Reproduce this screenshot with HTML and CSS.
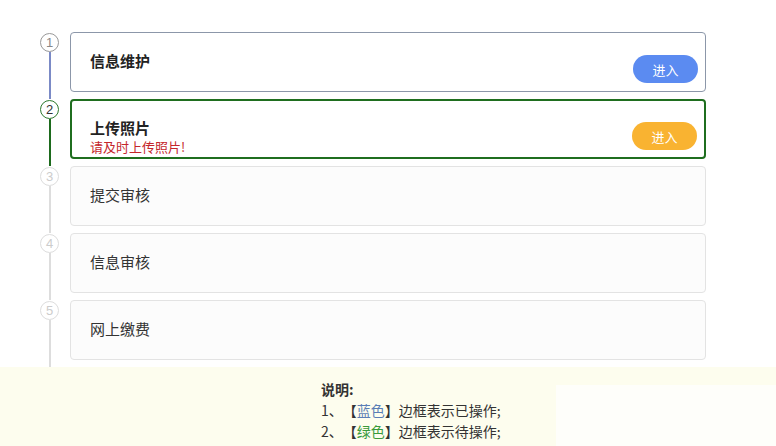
FILE: index.html
```html
<!DOCTYPE html>
<html lang="zh-CN">
<head>
    <meta charset="UTF-8">
    <title>流程</title>
    <link rel="stylesheet" href="styles.css">
</head>
<body>
    <div class="steps">
        <div class="step done">
            <div class="marker"><span class="num">1</span><span class="line"></span></div>
            <div class="card">
                <div class="info"><div class="title">信息维护</div></div>
                <button class="btn blue">进入</button>
            </div>
        </div>
        <div class="step current">
            <div class="marker"><span class="num">2</span><span class="line"></span></div>
            <div class="card">
                <div class="info">
                    <div class="title">上传照片</div>
                    <div class="tip">请及时上传照片!</div>
                </div>
                <button class="btn orange">进入</button>
            </div>
        </div>
        <div class="step">
            <div class="marker"><span class="num">3</span><span class="line"></span></div>
            <div class="card"><div class="info"><div class="title">提交审核</div></div></div>
        </div>
        <div class="step">
            <div class="marker"><span class="num">4</span><span class="line"></span></div>
            <div class="card"><div class="info"><div class="title">信息审核</div></div></div>
        </div>
        <div class="step">
            <div class="marker"><span class="num">5</span><span class="line"></span></div>
            <div class="card"><div class="info"><div class="title">网上缴费</div></div></div>
        </div>
    </div>

    <div class="notes">
        <div class="notes-text">
            <div class="notes-head">说明:</div>
            <div>1、【<span class="c-blue">蓝色</span>】边框表示已操作;</div>
            <div>2、【<span class="c-green">绿色</span>】边框表示待操作;</div>
        </div>
        <div class="notes-blank"></div>
    </div>
</body>
</html>
```

FILE: styles.css
```css
body {
    margin: 0;
    background: #fff;
    font-family: "Noto Sans CJK SC", "Microsoft YaHei", sans-serif;
    color: #333;
    overflow: hidden;
    text-spacing-trim: space-all;
}
.steps {
    padding: 32px 0 0 40px;
}
.step {
    display: flex;
    height: 67px;
}
.marker {
    width: 19px;
    display: flex;
    flex-direction: column;
    align-items: center;
    margin-top: 1px;
}
.num {
    box-sizing: border-box;
    width: 19px;
    height: 19px;
    border: 1px solid #ddd;
    border-radius: 50%;
    font-family: "Liberation Sans", Arial, sans-serif;
    font-size: 13px;
    line-height: 17px;
    text-align: center;
    color: #ccc;
}
.line {
    flex: 1;
    width: 2px;
    background: #ddd;
}
.done .num {
    border-color: #999;
    color: #888;
}
.done .line {
    background: #7b8ac6;
}
.current .num {
    border-color: #2d7a2d;
    color: #333;
}
.current .line {
    background: #1d6a1d;
}
.card {
    box-sizing: border-box;
    width: 636px;
    height: 60px;
    margin-left: 11px;
    padding: 0 7px 0 19px;
    border: 1px solid #e3e3e3;
    border-radius: 4px;
    background: #fcfcfc;
    display: flex;
    justify-content: space-between;
}
.done .card {
    border-color: #8c97a9;
    background: #fff;
}
.current .card {
    border: 2px solid #1f6e1f;
    padding-left: 18px;
    background: #fff;
}
.info {
    padding-top: 18px;
}
.current .info {
    padding-top: 17px;
}
.title {
    font-size: 15px;
    line-height: 20px;
    color: #333;
}
.done .title,
.current .title {
    font-weight: bold;
    color: #222;
}
.tip {
    font-size: 13px;
    line-height: 18px;
    color: #c4262b;
}
.btn {
    align-self: flex-end;
    margin-bottom: 8px;
    width: 65px;
    height: 28px;
    border: none;
    border-radius: 14px;
    color: #fff;
    font-family: inherit;
    font-size: 13px;
    cursor: pointer;
}
.current .btn {
    margin-bottom: 7px;
}
.blue {
    background: #5b8bf1;
}
.orange {
    background: #f9b331;
}
.notes {
    display: flex;
    height: 79px;
    background: #fdfdee;
}
.notes-text {
    padding: 12px 0 0 321px;
    width: 235px;
    font-size: 14px;
    line-height: 21px;
    color: #333;
}
.notes-head {
    font-weight: bold;
}
.c-blue {
    color: #5a7db5;
}
.c-green {
    color: #3a9a3a;
}
.notes-blank {
    flex: 1;
    margin-top: 18px;
    background: #fefefa;
}
```
